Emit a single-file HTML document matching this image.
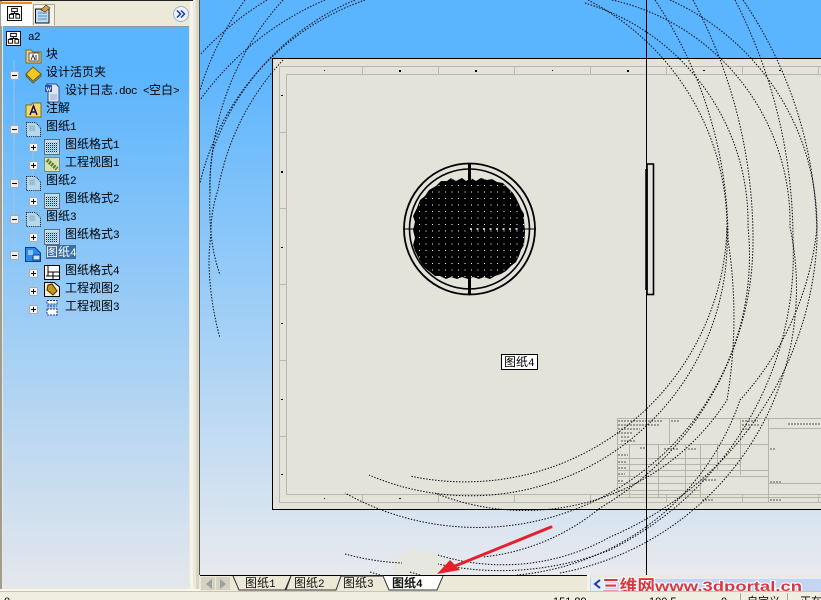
<!DOCTYPE html>
<html><head><meta charset="utf-8">
<style>
html,body{margin:0;padding:0;background:#ece9d8;width:821px;height:600px;overflow:hidden}
#root{position:relative;width:821px;height:600px;overflow:hidden;font-family:"Liberation Sans","WenQuanYi Zen Hei",sans-serif}
.a{position:absolute}
#tree div.t{position:absolute;font:12px/14px "WenQuanYi Zen Hei","Noto Sans CJK SC",sans-serif;color:#000;white-space:nowrap}
.t i,.tab i{font:normal 11px/14px "Liberation Mono",monospace;letter-spacing:-.6px}
.tab{position:absolute;top:576px;font:12px/14px "WenQuanYi Zen Hei","Noto Sans CJK SC",sans-serif;color:#111;white-space:nowrap}
.st{position:absolute;top:595px;font:11px/14px "Liberation Sans","Noto Sans CJK SC",sans-serif;color:#000;white-space:nowrap}
</style></head><body><div id="root">
<div class="a" style="left:0;top:0;width:821px;height:600px;background:#ece9d8"></div>

<!-- graphics area -->
<div class="a" style="left:200px;top:0;width:621px;height:575px;background:linear-gradient(#5ab4fe 0,#5ab4fe 60px,#e8eaee 575px)"></div>

<!-- left panel -->
<div class="a" style="left:0;top:0;width:200px;height:1px;background:#222"></div>
<div class="a" style="left:0;top:1px;width:2px;height:588px;background:#a09c90"></div>
<div class="a" style="left:3px;top:26px;width:186px;height:562px;background:linear-gradient(#5ab4fe 0,#5ab4fe 40px,#e4e7ec 100%)"></div>
<div class="a" style="left:3px;top:26px;width:186px;height:1px;background:#8f9aa0"></div>
<div class="a" style="left:190px;top:1px;width:3px;height:589px;background:#f6f4ea"></div>
<div class="a" style="left:196px;top:0;width:3px;height:592px;background:#d8d5c6"></div>
<div class="a" style="left:193px;top:0;width:3px;height:592px;background:#ece9d8"></div>
<div class="a" style="left:0;top:589px;width:200px;height:2px;background:#faf8ee"></div>
<div class="a" style="left:199px;top:0;width:1px;height:575px;background:#555"></div>

<!-- panel tabs -->
<div class="a" style="left:1px;top:2px;width:31px;height:24px;background:#fff;border-top:2px solid #e68b2c;box-sizing:border-box"></div>
<div class="a" style="left:33px;top:4px;width:22px;height:21px;background:#f4f2e6;border:1px solid #aca899;border-bottom:0;box-sizing:border-box"></div>

<svg class="a" style="left:0;top:0" width="200" height="330" viewBox="0 0 200 330">
<defs>
<pattern id="dp" width="2" height="2" patternUnits="userSpaceOnUse"><rect width="1" height="1" fill="#222"/><rect x="1" y="1" width="1" height="1" fill="#8cc4e8"/></pattern>
<symbol id="fm" viewBox="0 0 16 16" overflow="visible"><rect x=".5" y=".5" width="15" height="15" fill="#c8dce8" stroke="#111" stroke-dasharray="1 1"/><rect x="2" y="3" width="12" height="11" fill="url(#dp)"/></symbol>
<symbol id="sh" viewBox="0 0 16 16" overflow="visible"><path d="M.5.5H10L15.500 6V15.500H.5Z" fill="#b6d8ee" stroke="#111" stroke-dasharray="1 1"/><rect x="3" y="3" width="7" height="7" fill="url(#dp)" opacity=".5"/></symbol>
<symbol id="mi" viewBox="0 0 9 9"><rect x=".5" y=".5" width="8" height="8" rx="1" fill="#eee" stroke="#aab"/><path d="M2 4.500H7" stroke="#000"/></symbol>
<symbol id="pl" viewBox="0 0 9 9"><rect x=".5" y=".5" width="8" height="8" rx="1" fill="#f4f4f0" stroke="#aab"/><path d="M2 4.500H7M4.500 2V7" stroke="#000"/></symbol>
<symbol id="asm" viewBox="0 0 16 16"><rect x=".5" y=".5" width="15" height="15" fill="#fff" stroke="#000"/><path d="M5 2.500H11V6H5ZM2.500 9H7V13H2.500ZM9.500 9H13.500V13H9.500ZM8 6V8M4 8H12V9M4 8V9" fill="none" stroke="#000"/></symbol>
</defs>
<!-- tree line -->
<path d="M14 60V255M33 135V310" stroke="#9ec4dc" fill="none"/>
<!-- tab icons -->
<use href="#asm" x="7" y="6" width="15" height="15"/>
<path d="M35.500 9H49V23H35.500Z" fill="#bcdcf4" stroke="#111"/>
<path d="M38 13H47M38 16H47M38 19H47" stroke="#5a8ab0"/>
<path d="M41 10L46 5L50 8L45 12Z" fill="#d4a050" stroke="#604010" stroke-width=".7"/>
<circle cx="181" cy="14" r="7.500" fill="#eef2fa" stroke="#9cb0d0"/>
<path d="M177 10.500L180.500 14L177 17.500M181 10.500L184.500 14L181 17.500" fill="none" stroke="#1c3c94" stroke-width="1.500"/>
<!-- root -->
<use href="#asm" x="6" y="31" width="15" height="15"/>
<!-- block folder -->
<path d="M26 50H31L33 52H41V63H26Z" fill="#f0d080" stroke="#806820"/><rect x="29" y="53" width="10" height="8" fill="#fff" stroke="#555"/><path d="M31 60L33 55L35 60M36 55V60" stroke="#333" fill="none"/>
<!-- design binder -->
<path d="M26 74L33 67L41 74L33 81Z" fill="#f2c820" stroke="#705810"/><path d="M26 74V76L33 83L41 76V74" fill="none" stroke="#705810"/>
<!-- doc -->
<path d="M46 84H56L59 87V102H48V84Z" fill="#dbe6f6" stroke="#3a4c80"/><rect x="45" y="85" width="7" height="7" fill="#2a50b0"/><path d="M46 87L47.500 91L48.500 88L49.500 91L51 87" fill="none" stroke="#fff" stroke-width=".7"/><path d="M50 95H57M50 97H57M50 99H57" stroke="#8fa8d0"/>
<!-- annotation -->
<path d="M26 105H31L33 103H41V117H26Z" fill="#f6d868" stroke="#806820"/>
<path d="M30 115L33.500 106L37 115M31.500 112H35.500" fill="none" stroke="#101060" stroke-width="1.500"/>
<!-- sheets -->
<use href="#sh" x="26" y="122" width="15" height="15"/>
<use href="#sh" x="26" y="176" width="15" height="15"/>
<use href="#sh" x="26" y="212" width="15" height="15"/>
<path d="M25.500 247.500H35L40.500 253V261.500H25.500Z" fill="#2c8ae8" stroke="#0a3c90"/><rect x="33" y="255" width="7" height="5" fill="#cfe6fa" stroke="#0a3c90"/><rect x="28" y="250" width="5" height="5" fill="#8cc4f4"/>
<!-- sheet formats -->
<use href="#fm" x="44" y="139" width="16" height="16"/>
<use href="#fm" x="44" y="193" width="16" height="16"/>
<use href="#fm" x="44" y="229" width="16" height="16"/>
<rect x="44.500" y="265.500" width="15" height="14" fill="#fff" stroke="#000"/><path d="M48 266V272H59M48 272V276H59M46 276H59M53 272V279" stroke="#000" fill="none"/>
<!-- views -->
<rect x="44.500" y="157.500" width="15" height="14" fill="#d4e4b0" stroke="#444" stroke-dasharray="1 1"/><path d="M47 160L57 169" stroke="#5a7a30" stroke-width="4" stroke-dasharray="2 1"/>
<path d="M44.500 282.500H54L59.500 287V296.500H44.500Z" fill="#f4f0d8" stroke="#000"/><path d="M48 285L52 284L57 291L53 295L47 290Z" fill="#c89818" stroke="#3c2c00"/>
<path d="M47 300.500H57V304H47ZM47 306H57M47 309H57V315H47Z" fill="#fff" stroke="#203880" stroke-dasharray="2 1"/>
<!-- expanders -->
<use href="#mi" x="10" y="71" width="9" height="9"/>
<use href="#mi" x="10" y="125" width="9" height="9"/>
<use href="#mi" x="10" y="179" width="9" height="9"/>
<use href="#mi" x="10" y="215" width="9" height="9"/>
<use href="#mi" x="10" y="251" width="9" height="9"/>
<use href="#pl" x="29" y="143" width="9" height="9"/>
<use href="#pl" x="29" y="161" width="9" height="9"/>
<use href="#pl" x="29" y="197" width="9" height="9"/>
<use href="#pl" x="29" y="233" width="9" height="9"/>
<use href="#pl" x="29" y="269" width="9" height="9"/>
<use href="#pl" x="29" y="287" width="9" height="9"/>
<use href="#pl" x="29" y="305" width="9" height="9"/>
</svg>

<div id="tree">
<div class="a" style="left:46px;top:245px;width:30px;height:14px;background:#3a6ea5"></div>
<div class="t" style="left:28px;top:29px"><i>a2</i></div>
<div class="t" style="left:46px;top:47px">块</div>
<div class="t" style="left:46px;top:65px">设计活页夹</div>
<div class="t" style="left:65px;top:83px">设计日志<i style="letter-spacing:-.6px">.doc &lt;</i>空白<i>&gt;</i></div>
<div class="t" style="left:46px;top:101px">注解</div>
<div class="t" style="left:46px;top:119px">图纸<i>1</i></div>
<div class="t" style="left:65px;top:137px">图纸格式<i>1</i></div>
<div class="t" style="left:65px;top:155px">工程视图<i>1</i></div>
<div class="t" style="left:46px;top:173px">图纸<i>2</i></div>
<div class="t" style="left:65px;top:191px">图纸格式<i>2</i></div>
<div class="t" style="left:46px;top:209px">图纸<i>3</i></div>
<div class="t" style="left:65px;top:227px">图纸格式<i>3</i></div>
<div class="t" style="left:46px;top:245px;color:#fff">图纸<i>4</i></div>
<div class="t" style="left:65px;top:263px">图纸格式<i>4</i></div>
<div class="t" style="left:65px;top:281px">工程视图<i>2</i></div>
<div class="t" style="left:65px;top:299px">工程视图<i>3</i></div>
</div>

<!-- drawing -->
<svg class="a" style="left:0;top:0" width="821" height="600" viewBox="0 0 821 600">
<defs>
<pattern id="holes" width="6.500" height="6.500" patternUnits="userSpaceOnUse"><rect x="3" y="3" width="1" height="1" fill="#fff"/></pattern>
<clipPath id="gfx"><rect x="200" y="0" width="621" height="575"/></clipPath>
</defs>
<rect x="272.500" y="58.500" width="560" height="451" fill="#e3e3d9" stroke="#000"/>
<ellipse cx="420" cy="566" rx="28" ry="16" fill="#e6e6dc" opacity=".85" clip-path="url(#gfx)"/>
<!-- border lines -->
<g stroke="#b8b8ac" fill="none">
<path d="M279.500 66.500H821M286.500 74.500H821M279.500 66.500V502.500H821M286.500 74.500V494.500H821"/>
<path d="M362.500 66V74M438.500 66V74M514.500 66V74M590.500 66V74M666.500 66V74M742.500 66V74M818.500 66V74"/>
<path d="M362.500 494V502M438.500 494V502M514.500 494V502M590.500 494V502M666.500 494V502M742.500 494V502M818.500 494V502"/>
<path d="M280 132.500H287M280 208.500H287M280 284.500H287M280 360.500H287M280 436.500H287"/>
</g>
<!-- dots -->
<g fill="#000">
<rect x="324" y="70" width="1" height="1"/><rect x="399" y="70" width="2" height="2"/><rect x="475" y="70" width="2" height="2"/><rect x="552" y="70" width="1" height="1"/><rect x="627" y="70" width="2" height="2"/><rect x="703" y="70" width="2" height="1"/><rect x="779" y="70" width="2" height="1"/>
<rect x="281" y="95" width="2" height="1"/><rect x="281" y="171" width="2" height="2"/><rect x="281" y="247" width="2" height="1"/><rect x="281" y="323" width="2" height="1"/><rect x="281" y="399" width="2" height="1"/><rect x="281" y="474" width="2" height="1"/>
<rect x="324" y="498" width="1" height="1"/><rect x="399" y="498" width="2" height="1"/>
</g>
<!-- title block -->
<g stroke="#b4b4a8" fill="none">
<path d="M617.500 418.500H821M617.500 418.500V497M669.500 418.500V444M740.500 418.500V475M768.500 418.500V502M768.500 428.500H821M617.500 444.500H768"/>
<path d="M617.500 458.500H740M617.500 464.500H740M617.500 470.500H768M617.500 476.500H700M617.500 483.500H700M617.500 490.500H700M617.500 497.500H821M629.500 444.500V497M658.500 444.500V497M685.500 444.500V497M700.500 444.500V497M717.500 444.500V470M768 483.500H821M700 476.500H768"/>
</g>
<g stroke="#333" stroke-width="1" stroke-dasharray="2 1" fill="none" opacity=".8">
<path d="M618 421H662M618 425H660M618 429H640M618 433H632M621 437H630M621 441H636M671 421H680M742 421H758M742 425H759M742 429H750M788 424H821"/>
<path d="M640 448H646M664 449H678M688 449H696M618 455H628M618 462H626M618 468H626M618 474H625M618 481H624M702 480H716M770 449H776M770 482H782M770 500H782M702 500H714"/>
</g>
<!-- hole pattern part -->
<path id="blob" d="M436 186L441 181L447 181L451 178L456 181L462 178L466 181L471 178L476 181L481 178L487 180L492 179L497 182L503 183L508 188L513 193L516 198L519 204L521 209L524 214L524 220L525 232L524 245L521 250L519 256L516 262L511 266L506 271L501 274L495 276L490 279L484 277L479 279L473 277L468 279L462 277L457 279L451 277L446 279L440 276L435 276L430 272L425 268L421 263L418 257L415 251L413 245L415 238L413 230L415 222L413 216L417 208L420 200L425 196L429 190Z" fill="#000"/>
<path d="M436 186L441 181L447 181L451 178L456 181L462 178L466 181L471 178L476 181L481 178L487 180L492 179L497 182L503 183L508 188L513 193L516 198L519 204L521 209L524 214L524 220L525 232L524 245L521 250L519 256L516 262L511 266L506 271L501 274L495 276L490 279L484 277L479 279L473 277L468 279L462 277L457 279L451 277L446 279L440 276L435 276L430 272L425 268L421 263L418 257L415 251L413 245L415 238L413 230L415 222L413 216L417 208L420 200L425 196L429 190Z" fill="url(#holes)"/>
<path d="M470 229H522" stroke="#fff" stroke-dasharray="2 4.500" stroke-width="1.500"/>
<circle cx="469.500" cy="229" r="65.500" fill="none" stroke="#000" stroke-width="1.800"/>
<circle cx="469.500" cy="229" r="60" fill="none" stroke="#000" stroke-width="1.600"/>
<path d="M469.500 164V180M469.500 278V294" stroke="#000" stroke-width="3"/>
<path d="M403 229H416M523 229H536" stroke="#000"/>
<!-- thin side part -->
<rect x="647" y="164" width="6.500" height="130.500" fill="#e3e3d9" stroke="#000" stroke-width="1.600"/>
<path d="M646.500 169V290" stroke="#000" stroke-width="2.500"/>
<!-- centre line -->
<path d="M646.500 0V575" stroke="#000"/>
<!-- sheet name box -->
<rect x="501.500" y="354.500" width="36" height="15" fill="#fff" stroke="#000"/>
<text x="504" y="366" font-family="WenQuanYi Zen Hei,Noto Sans CJK SC,sans-serif" font-size="12" fill="#000">图纸<tspan font-family="Liberation Mono,monospace" font-size="11">4</tspan></text>
<!-- dotted arcs -->
<g clip-path="url(#gfx)" fill="none" stroke="#0a0a14" stroke-width="1" stroke-dasharray="1.500 1.500">
<!-- top-left -->
<path d="M267 0A300 300 0 0 0 200 55"/>
<path d="M245 0A300 300 0 0 0 200 90"/>
<path d="M283 0A280 280 0 0 0 210 193"/>
<path d="M325 0A300 300 0 0 0 200 100"/>
<path d="M365 0A256 256 0 0 0 200 183"/>
<path d="M355 0A256 256 0 0 0 213 150A200 200 0 0 0 210 193A300 300 0 0 0 211 233A300 300 0 0 0 209 257A300 300 0 0 0 220 338"/>
<path d="M283 60A256 256 0 0 0 218 190A130 130 0 0 0 211 233A180 180 0 0 0 220 275"/>
<!-- main circle -->
<path d="M588 0A257 257 0 0 1 727 228A257 257 0 0 1 369 475"/>
<path d="M727 228A262 262 0 0 1 410 476"/>
<!-- top-right sets -->
<path d="M612 0A228 228 0 0 1 790 227A290 290 0 0 1 560 573"/>
<path d="M585 3A229 229 0 0 1 748 227A272 272 0 0 1 345 493"/>
<path d="M655 0A431 431 0 0 1 728 240A500 500 0 0 1 727 400A240 240 0 0 1 435 493"/>
<path d="M670 0A249 249 0 0 1 817 227A300 300 0 0 1 740 400A260 260 0 0 1 517 575"/>
<path d="M693 0A510 510 0 0 1 753 240A310 310 0 0 1 600 508A220 220 0 0 1 483 557"/>
<path d="M735 0A525 525 0 0 1 793 240A330 330 0 0 1 610 550A300 300 0 0 1 438 564"/>
<path d="M743 0A426 426 0 0 1 817 240A340 340 0 0 1 610 537A220 220 0 0 1 438 555"/>
<path d="M345 554A260 260 0 0 0 402 563"/>
<path d="M370 572L380 575M410 572L420 575"/>
</g>
<!-- tab bar -->
<rect x="200" y="576" width="387" height="15" fill="#ece9d8"/>
<path d="M200 575.500H587" stroke="#000"/>
<rect x="587" y="575" width="3" height="17" fill="#f4f2e6"/>
<rect x="201" y="577" width="14" height="13" fill="#d4d2c4"/><rect x="216" y="577" width="14" height="13" fill="#d4d2c4"/>
<path d="M212 579L206 584L212 589ZM220 579L226 584L220 589Z" fill="#a0a09a"/>
<path d="M382 576H443L437 590H389Z" fill="#fff"/>
<path d="M233 576L239 590H285L291 576M286 590L291 576M291 576L286 590H336L341 576M336 590L341 576H383L389 590H437L443 576" fill="none" stroke="#333"/>
<!-- arrow -->
<path d="M551 527L455 566" stroke="#e4202c" stroke-width="3" stroke-linecap="round"/>
<path d="M437 574L450 560L460 570Z" fill="#e4202c"/>
<!-- scrollbar -->
<rect x="590" y="577" width="231" height="14" fill="#c4d4f4"/>
<rect x="591" y="577" width="14" height="14" fill="#e4ecfc"/>
<path d="M600 580L595 584L600 588" fill="none" stroke="#1c3c94" stroke-width="2"/>
<rect x="606" y="577" width="215" height="2" fill="#e4ecfc"/>
<!-- watermark -->
<text x="602" y="592" font-family="Noto Sans CJK SC,sans-serif" font-size="17" font-weight="700" fill="#d83840" stroke="#fff" stroke-width="2" paint-order="stroke" textLength="53" lengthAdjust="spacingAndGlyphs">三维网</text>
<text x="655" y="591" font-family="Liberation Sans,sans-serif" font-size="14" font-weight="700" fill="#d83840" stroke="#fff" stroke-width="2" paint-order="stroke" textLength="147" lengthAdjust="spacingAndGlyphs">www.3dportal.cn</text>
</svg>

<div class="tab" style="left:245px">图纸<i>1</i></div>
<div class="tab" style="left:294px">图纸<i>2</i></div>
<div class="tab" style="left:343px">图纸<i>3</i></div>
<div class="tab" style="left:392px;font-weight:700">图纸<i style="font-weight:700">4</i></div>

<!-- status bar -->
<div class="a" style="left:0;top:591px;width:821px;height:1px;background:#c8c5b4"></div>
<div class="a" style="left:0;top:592px;width:821px;height:8px;background:#f0eee0"></div>
<div class="st" style="left:4px">0</div>
<div class="st" style="left:553px">151.89</div>
<div class="st" style="left:649px">100.5</div>
<div class="st" style="left:721px">0</div>
<div class="st" style="left:747px">自定义</div>
<div class="st" style="left:800px">正在</div>
<div class="a" style="left:740px;top:593px;width:1px;height:7px;background:#aca899"></div>
<div class="a" style="left:787px;top:593px;width:1px;height:7px;background:#aca899"></div>
</div></body></html>
